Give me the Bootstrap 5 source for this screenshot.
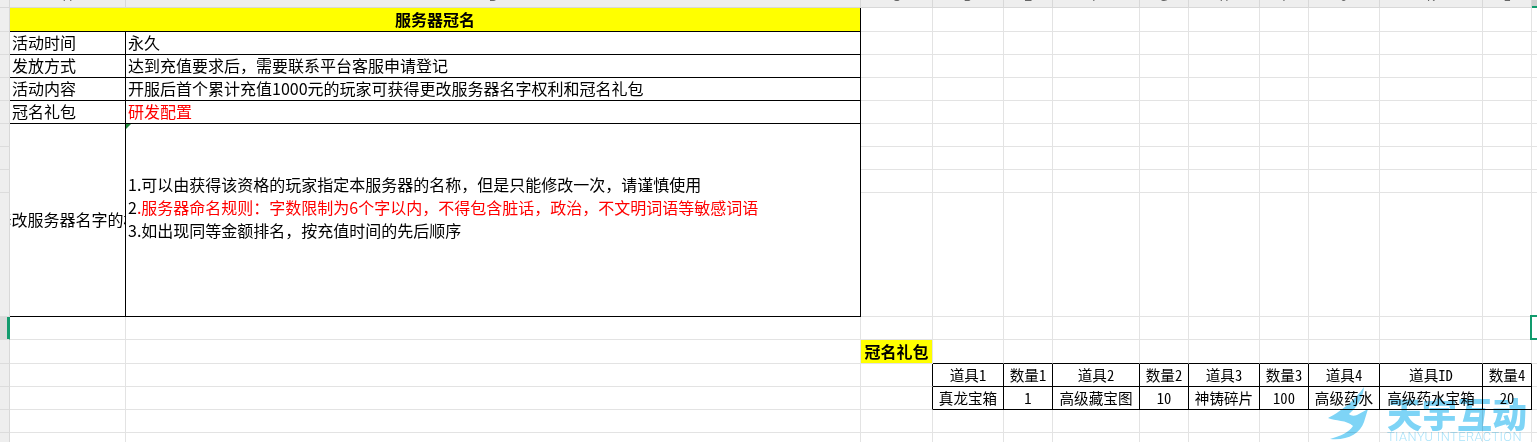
<!DOCTYPE html>
<html lang="zh-CN">
<head>
<meta charset="utf-8">
<title>服务器冠名</title>
<link href="https://cdn.jsdelivr.net/npm/bootstrap@5.3.0/dist/css/bootstrap.min.css" rel="stylesheet">
<style>
html,body{height:442px;overflow:hidden;background:#fff}
body{font-family:"Noto Sans CJK SC","Liberation Sans",sans-serif;font-size:16px;color:#000}
.sheet-wrap{width:1537px;height:442px;overflow:hidden}
.sheet-grid{table-layout:fixed;border-collapse:separate;border-spacing:0;width:1537px}
.sheet-grid td{padding:0;border-right:1px solid #e3e3e3;border-bottom:1px solid #e3e3e3;line-height:20px;white-space:nowrap;overflow:hidden;vertical-align:middle}
.sheet-grid td.open-cell{overflow:visible}
.sheet-grid tr:last-child td{border-bottom:0}
.sheet-grid td:last-child{border-right:0}
.r8{height:8px}.r9{height:9px}.r23{height:23px}.r24{height:24px}.r124{height:124px}
.sheet-grid td.gut{background:#eee;border-right-color:#d8d8d8;border-bottom-color:#dcdcdc}
.sheet-grid td.gut-on{background:#dadada;box-shadow:inset -2px 0 0 #129b6d;border-right-color:#129b6d}
.sheet-grid td.hd{background:#eee;border-bottom-color:#d8d8d8;border-right-color:#d8d8d8;font-family:"Liberation Sans",sans-serif;font-size:12px;color:#666}
.sheet-grid td.hd-on{background:#cfcfcf;border-bottom:2px solid #129b6d}
.hd-clip{height:7px;overflow:hidden}
.hd-clip span{display:block;line-height:14px;margin-top:-10px;text-align:center}
.sheet-grid td.ink{border-right-color:#000;border-bottom-color:#000}
.sheet-grid td.ink-r{border-right-color:#000}
.sheet-grid td.ink-b{border-bottom-color:#000}
.sheet-grid td.hi{background:#ff0}
.sheet-grid td.tx{padding-left:2px}
.sheet-grid td.up{padding-bottom:2px}
.hot{color:#f00}
.clip-center{display:flex;justify-content:center;overflow:hidden}
.clip-center span{flex:none}
.rule-lines{padding-left:2px;padding-bottom:25px;line-height:23px}
.note-tri{position:absolute;left:0;top:0;width:0;height:0;border-top:5px solid #1e8a3c;border-right:5px solid transparent}
.sel-box{position:absolute;left:-2px;top:-2px;right:0;bottom:-1px;border:2px solid #129b6d;border-right:0}
.mini{font-family:"Noto Sans Mono CJK SC","Noto Sans CJK SC","Liberation Mono",monospace;font-size:14.6px;font-weight:300}
.wm{position:absolute;left:1327px;top:385px;width:206px;height:57px;overflow:hidden;pointer-events:none;mix-blend-mode:multiply}
.wm svg{flex:none}
.wm-cn{font-size:35px;font-weight:900;line-height:35px;color:#7ed4f6;white-space:nowrap;margin-top:10px}
.wm-en{font-family:Roboto,"Liberation Sans",sans-serif;font-weight:300;font-size:12.8px;line-height:14px;letter-spacing:.45px;color:#a9e3fa;white-space:nowrap}
</style>
</head>
<body>
<div class="sheet-wrap position-relative">
<table class="sheet-grid">
<colgroup>
<col style="width:10px"><col style="width:116px"><col style="width:735px"><col style="width:72px"><col style="width:71px"><col style="width:49px"><col style="width:87px"><col style="width:49px"><col style="width:71px"><col style="width:49px"><col style="width:71px"><col style="width:103px"><col style="width:49px"><col style="width:5px">
</colgroup>
<tbody>
<tr class="r8">
<td class="hd"></td>
<td class="hd"><div class="hd-clip"><span>A</span></div></td>
<td class="hd"><div class="hd-clip"><span>B</span></div></td>
<td class="hd"><div class="hd-clip"><span>C</span></div></td>
<td class="hd"><div class="hd-clip"><span>D</span></div></td>
<td class="hd"><div class="hd-clip"><span>E</span></div></td>
<td class="hd"><div class="hd-clip"><span>F</span></div></td>
<td class="hd"><div class="hd-clip"><span>G</span></div></td>
<td class="hd"><div class="hd-clip"><span>H</span></div></td>
<td class="hd"><div class="hd-clip"><span>I</span></div></td>
<td class="hd"><div class="hd-clip"><span>J</span></div></td>
<td class="hd"><div class="hd-clip"><span>K</span></div></td>
<td class="hd"><div class="hd-clip"><span>L</span></div></td>
<td class="hd hd-on"></td>
</tr>
<tr class="r24"><td class="gut"></td><td colspan="2" class="hi ink up text-center fw-bold">服务器冠名</td><td></td><td></td><td></td><td></td><td></td><td></td><td></td><td></td><td></td><td></td><td></td></tr>
<tr class="r23"><td class="gut"></td><td class="ink tx up">活动时间</td><td class="ink tx up">永久</td><td></td><td></td><td></td><td></td><td></td><td></td><td></td><td></td><td></td><td></td><td></td></tr>
<tr class="r23"><td class="gut"></td><td class="ink tx up">发放方式</td><td class="ink tx up">达到充值要求后，需要联系平台客服申请登记</td><td></td><td></td><td></td><td></td><td></td><td></td><td></td><td></td><td></td><td></td><td></td></tr>
<tr class="r23"><td class="gut"></td><td class="ink tx up">活动内容</td><td class="ink tx up">开服后首个累计充值1000元的玩家可获得更改服务器名字权利和冠名礼包</td><td></td><td></td><td></td><td></td><td></td><td></td><td></td><td></td><td></td><td></td><td></td></tr>
<tr class="r23"><td class="gut"></td><td class="ink tx up">冠名礼包</td><td class="ink tx up hot">研发配置</td><td></td><td></td><td></td><td></td><td></td><td></td><td></td><td></td><td></td><td></td><td></td></tr>
<tr class="r23"><td class="gut"></td>
<td rowspan="4" class="ink up"><div class="clip-center"><span>修改服务器名字的权</span></div></td>
<td rowspan="4" class="ink position-relative"><span class="note-tri"></span><div class="rule-lines">1.可以由获得该资格的玩家指定本服务器的名称，但是只能修改一次，请谨慎使用<br>2<span class="hot">.服务器命名规则：字数限制为6个字以内，不得包含脏话，政治，不文明词语等敏感词语</span><br>3.如出现同等金额排名，按充值时间的先后顺序</div></td>
<td></td><td></td><td></td><td></td><td></td><td></td><td></td><td></td><td></td><td></td><td></td></tr>
<tr class="r23"><td class="gut"></td><td></td><td></td><td></td><td></td><td></td><td></td><td></td><td></td><td></td><td></td><td></td></tr>
<tr class="r23"><td class="gut"></td><td></td><td></td><td></td><td></td><td></td><td></td><td></td><td></td><td></td><td></td><td></td></tr>
<tr class="r124"><td class="gut"></td><td></td><td></td><td></td><td></td><td></td><td></td><td></td><td></td><td></td><td></td><td></td></tr>
<tr class="r23"><td class="gut gut-on"></td><td></td><td></td><td></td><td></td><td></td><td></td><td></td><td></td><td></td><td></td><td></td><td></td><td class="open-cell position-relative"><span class="sel-box"></span></td></tr>
<tr class="r24"><td class="gut"></td><td></td><td></td><td class="hi up fw-bold text-center">冠名礼包</td><td class="ink-b"></td><td class="ink-b"></td><td class="ink-b"></td><td class="ink-b"></td><td class="ink-b"></td><td class="ink-b"></td><td class="ink-b"></td><td class="ink-b"></td><td class="ink-b"></td><td></td></tr>
<tr class="r23 mini"><td class="gut"></td><td></td><td></td><td class="ink-r"></td><td class="ink text-center">道具1</td><td class="ink text-center">数量1</td><td class="ink text-center">道具2</td><td class="ink text-center">数量2</td><td class="ink text-center">道具3</td><td class="ink text-center">数量3</td><td class="ink text-center">道具4</td><td class="ink text-center">道具ID</td><td class="ink text-center">数量4</td><td></td></tr>
<tr class="r23 mini"><td class="gut"></td><td></td><td></td><td class="ink-r"></td><td class="ink text-center">真龙宝箱</td><td class="ink text-center">1</td><td class="ink text-center">高级藏宝图</td><td class="ink text-center">10</td><td class="ink text-center">神铸碎片</td><td class="ink text-center">100</td><td class="ink text-center">高级药水</td><td class="ink text-center">高级药水宝箱</td><td class="ink text-center">20</td><td></td></tr>
<tr class="r23"><td class="gut"></td><td></td><td></td><td></td><td></td><td></td><td></td><td></td><td></td><td></td><td></td><td></td><td></td><td></td></tr>
<tr class="r9"><td class="gut"></td><td></td><td></td><td></td><td></td><td></td><td></td><td></td><td></td><td></td><td></td><td></td><td></td><td></td></tr>
</tbody>
</table>
<div class="wm d-flex gap-3">
<svg width="44" height="57" viewBox="0 0 44 57" aria-hidden="true"><path fill="#7ed4f6" d="M37 2 C32 10 16 26 1 33 C8 36 20 35 26 41 C22 47 14 51 3 54 C19 56 33 49 37 37 L41 24 L30 30 C27 31 24 31 22 29 C29 23 36 14 37 2Z"/></svg>
<div><div class="wm-cn">天宇互动</div><div class="wm-en">TIANYU INTERACTION</div></div>
</div>
</div>
<script src="https://cdn.jsdelivr.net/npm/bootstrap@5.3.0/dist/js/bootstrap.bundle.min.js"></script>
</body>
</html>
